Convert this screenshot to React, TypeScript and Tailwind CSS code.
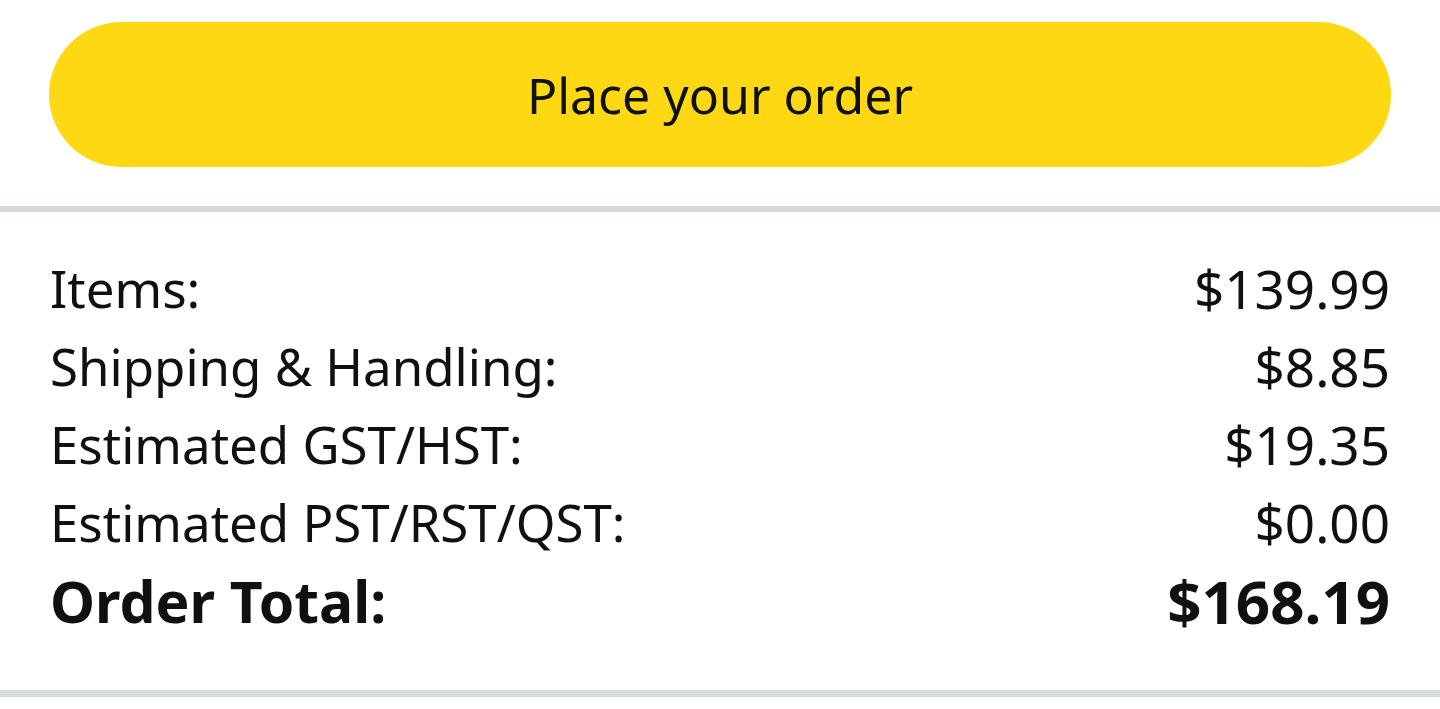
export default function App() {
  const rows = [
    { label: 'Items:', value: '$139.99' },
    { label: 'Shipping & Handling:', value: '$8.85' },
    { label: 'Estimated GST/HST:', value: '$19.35' },
    { label: 'Estimated PST/RST/QST:', value: '$0.00' },
  ]

  return (
    <div
      className="w-[1440px] h-[709px] bg-white text-[#0f1111] overflow-hidden"
      style={{ fontFamily: '"Noto Sans", "Open Sans", sans-serif' }}
    >
      {/* Place order button */}
      <div className="px-[49px] pt-[22px] pb-[39px]">
        <button className="w-full h-[145px] rounded-full bg-[#fdd813] text-[50px] leading-none text-[#0f1111] flex items-center justify-center">
          Place your order
        </button>
      </div>

      <div className="h-[6px] bg-[#d5dbdb]" />

      {/* Order summary */}
      <div className="px-[50px] pt-[37px] pb-[49px]">
        {rows.map((row) => (
          <div
            key={row.label}
            className="flex items-center justify-between h-[78px] text-[51px] leading-none"
          >
            <span>{row.label}</span>
            <span className="text-[53px]">{row.value}</span>
          </div>
        ))}
        <div className="flex items-center justify-between h-[80px] text-[57px] leading-none font-bold">
          <span>Order Total:</span>
          <span className="text-[60px]">$168.19</span>
        </div>
      </div>

      <div className="h-[7px] bg-[#d5dbdb]" />
    </div>
  )
}
